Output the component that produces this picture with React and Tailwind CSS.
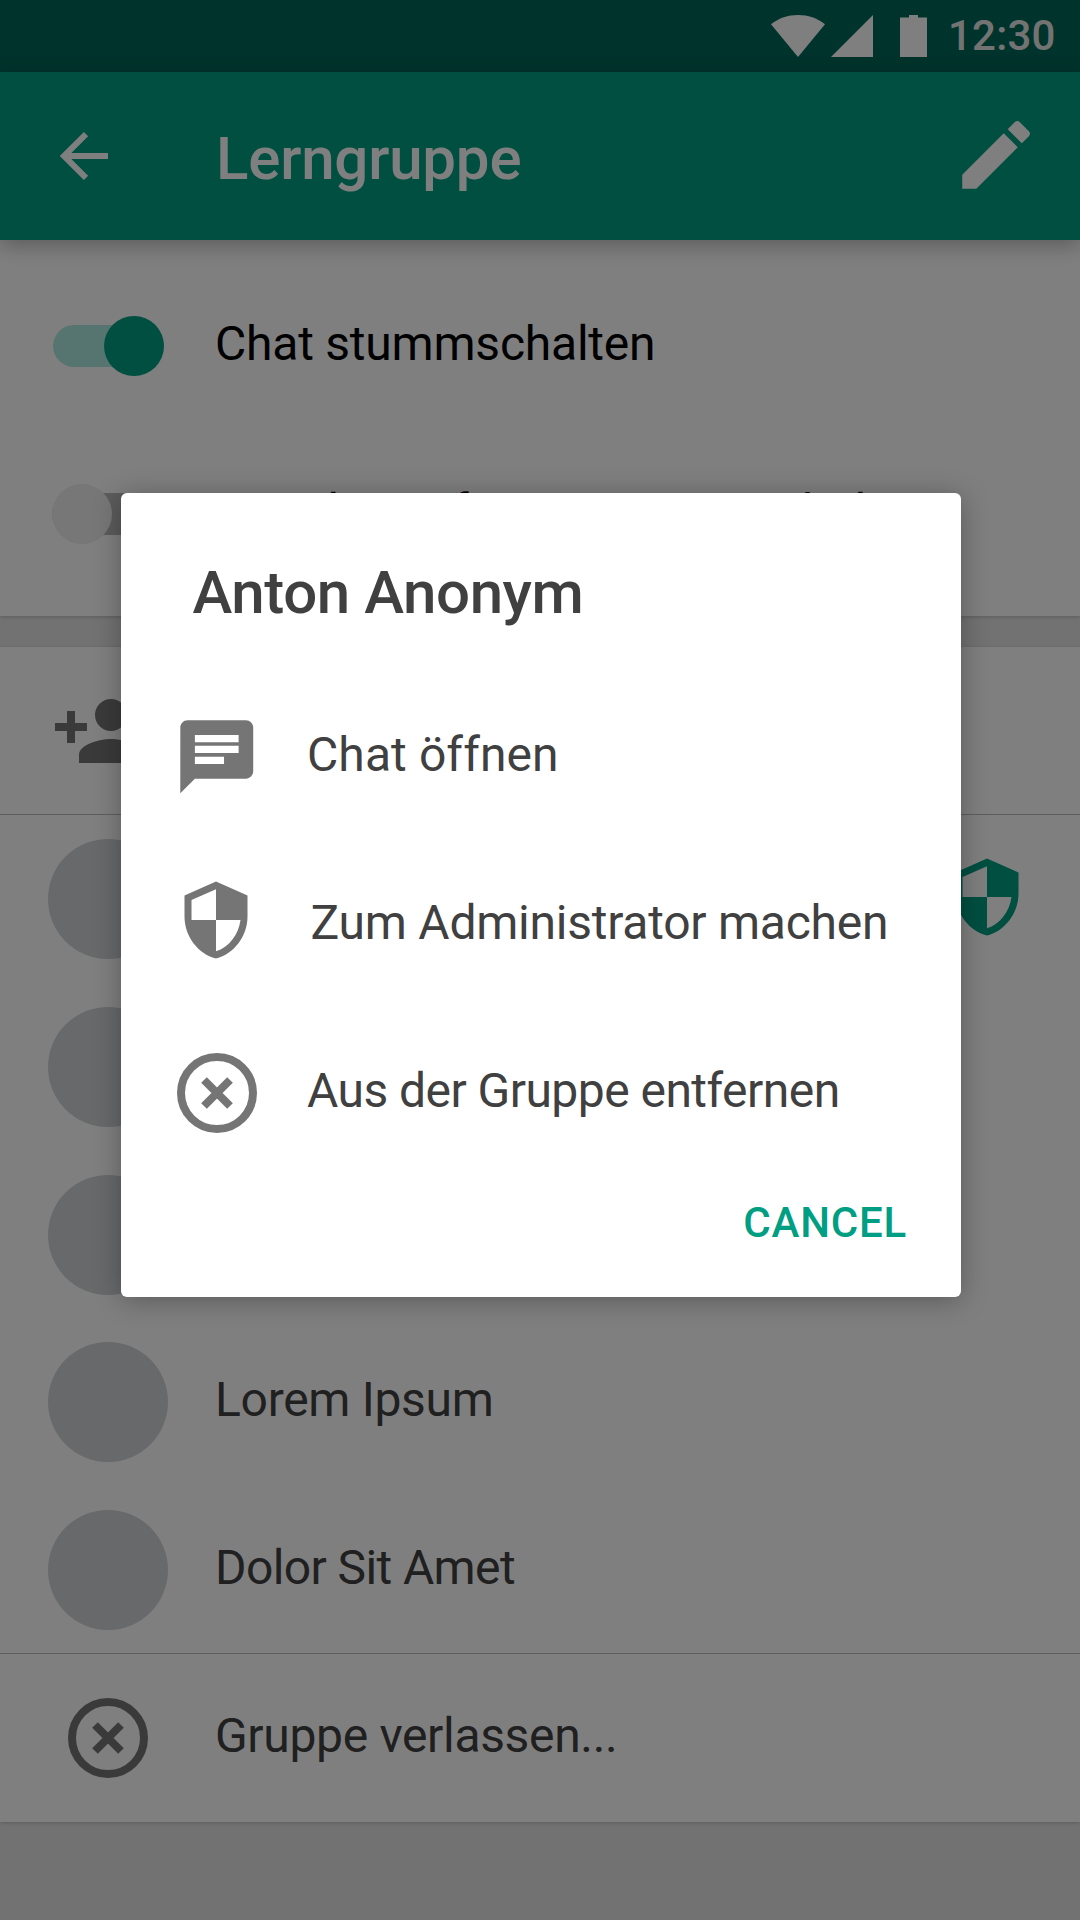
import React from "react";

function CircleX({ className }) {
  return (
    <svg viewBox="0 0 80 80" className={className} fill="none" stroke="#757575" strokeWidth="8">
      <circle cx="40" cy="40" r="36" />
      <path d="M27 27L53 53M53 27L27 53" />
    </svg>
  );
}

function Shield({ className }) {
  return (
    <svg viewBox="0 0 24 24" className={className} fill="currentColor">
      <path d="M12 1L3 5v6c0 5.55 3.84 10.74 9 12 5.16-1.26 9-6.45 9-12V5l-9-4zm0 10.99h7c-.53 4.12-3.28 7.79-7 8.94V12H5V6.3l7-3.11v8.8z" />
    </svg>
  );
}

function StatusBar() {
  return (
    <div className="flex h-[72px] items-start bg-[#006657] pl-[771px] text-white">
      <svg viewBox="0 0 156 42" className="mt-[15px] h-[42px] w-[156px] shrink-0" fill="#fff">
        <path d="M0 9.300C8 3 17 0 27 0s19 3 27 9.300L27 42z" />
        <path d="M102 0V42H60z" />
        <path d="M129 2.500h9V0h9v2.500h9V42h-27z" />
      </svg>
      <span className="ml-[21px] mt-[11px] text-[42px]/[50px] font-medium tracking-[0.2px] text-[#e6e6e6]">12:30</span>
    </div>
  );
}

function AppBar() {
  return (
    <div className="relative flex h-[168px] items-center bg-[#009e82] text-white shadow-[0_6px_20px_rgba(0,0,0,0.28)]">
      <svg viewBox="0 0 48 48" className="ml-[60px] size-12" fill="none" stroke="#fff" strokeWidth="6">
        <path d="M26 2.200L4 24l22 21.800M4 24h44" />
      </svg>
      <span className="ml-[108px] mt-[6px] text-[60px]/[72px] font-medium tracking-[-0.2px]">Lerngruppe</span>
      <svg viewBox="0 0 24 24" className="-mt-[2px] ml-auto mr-[39px] h-[90px] w-[90px]" fill="#fff">
        <path d="M3 17.250V21h3.750L17.810 9.940l-3.750-3.750L3 17.250zM20.710 7.040a.996.996 0 0 0 0-1.410l-2.340-2.340a.996.996 0 0 0-1.410 0l-1.830 1.830 3.750 3.750 1.830-1.830z" />
      </svg>
    </div>
  );
}

function Toggle({ on }) {
  return on ? (
    <span className="flex h-[42px] w-[111px] items-center justify-end rounded-full bg-[#adeae0]">
      <span className="size-[60px] rounded-full bg-[#009e82]" />
    </span>
  ) : (
    <span className="-ml-[1px] flex h-[42px] w-[112px] items-center rounded-full bg-[#b9b9b9]">
      <span className="size-[60px] shrink-0 rounded-full bg-[#eee]" />
    </span>
  );
}

function Setting({ on, label, labelClass }) {
  return (
    <div className="flex h-[168px] items-center pl-[53px]">
      <Toggle on={on} />
      <span className={`-mt-[5px] ml-[51px] whitespace-nowrap text-[48px]/[56px] text-black ${labelClass}`}>{label}</span>
    </div>
  );
}

function Member({ children, className = "h-[168px]" }) {
  return (
    <div className={`flex items-center pl-12 pr-[51px] ${className}`}>
      <span className="size-[120px] rounded-full bg-[#ced2d5]" />
      {children}
    </div>
  );
}

function Action({ icon, label, labelClass }) {
  return (
    <div className="flex h-[168px] items-center pl-[52px]">
      <span className="flex w-[88px] shrink-0 items-center justify-center">{icon}</span>
      <span className={`-mt-[3px] whitespace-nowrap text-[48px]/[56px] ${labelClass}`}>{label}</span>
    </div>
  );
}

function Dialog() {
  return (
    <div className="flex h-[804px] w-[840px] flex-col rounded-[6px] bg-white text-[#404040] shadow-[0_3px_28px_rgba(0,0,0,0.3)]">
      <h2 className="pl-[71.5px] pt-[65px] text-[60px]/[70px] font-medium tracking-[-0.43px]">Anton Anonym</h2>
      <div className="mt-[44px]">
        <Action
          label="Chat öffnen"
          labelClass="ml-[46px] tracking-[0.1px]"
          icon={
            <svg viewBox="0 0 24 24" className="mt-[2px] size-[87.5px] shrink-0" fill="#757575">
              <path d="M20 2H4c-1.100 0-1.990.900-1.990 2L2 22l4-4h14c1.100 0 2-.900 2-2V4c0-1.100-.900-2-2-2zM6 9h12v2H6V9zm8 5H6v-2h8v2zm4-6H6V6h12v2z" />
            </svg>
          }
        />
        <Action
          label="Zum Administrator machen"
          labelClass="ml-[49.5px] tracking-[-0.24px]"
          icon={<Shield className="-ml-[2px] -mt-[9px] size-[84px] text-[#757575]" />}
        />
        <Action
          label="Aus der Gruppe entfernen"
          labelClass="ml-[46px] tracking-[-0.54px]"
          icon={<CircleX className="mt-[2px] size-20" />}
        />
      </div>
      <button className="mr-[54px] mt-[19px] self-end text-[42px]/[56px] font-medium tracking-[0.8px] text-[#009e82]">CANCEL</button>
    </div>
  );
}

export default function App() {
  return (
    <div className="relative h-[1920px] w-[1080px] overflow-hidden bg-[#e5e5e5] font-['Roboto',sans-serif] text-[#404040]">
      <div className="relative z-10">
        <StatusBar />
        <AppBar />
      </div>
      <section className="h-[376px] bg-white pt-[22px] shadow-[0_1px_4px_rgba(0,0,0,0.2)]">
        <Setting on label="Chat stummschalten" labelClass="tracking-[-0.22px]" />
        <Setting label="Standortanfragen stummschalten" labelClass="tracking-normal" />
      </section>
      <section className="mt-[31px] bg-white shadow-[0_1px_4px_rgba(0,0,0,0.2)]">
        <div className="flex h-[168px] items-center border-b border-[#bdbdbd] pl-[51px]">
          <svg viewBox="0 0 24 24" className="size-24" fill="#757575">
            <path d="M15 12c2.210 0 4-1.790 4-4s-1.790-4-4-4-4 1.790-4 4 1.790 4 4 4zm-9-2V7H4v3H1v2h3v3h2v-3h3v-2H6zm9 4c-2.670 0-8 1.340-8 4v2h16v-2c0-2.660-5.330-4-8-4z" />
          </svg>
        </div>
        <Member>
          <Shield className="-mt-[5px] ml-auto size-[84px] text-[#009e82]" />
        </Member>
        <Member />
        <Member />
        <Member className="h-[168px] pb-[2px]">
          <span className="-mt-[5px] ml-[47px] text-[48px]/[56px] tracking-[-0.3px]">Lorem Ipsum</span>
        </Member>
        <Member className="h-[167px] border-b border-[#bdbdbd]">
          <span className="-mt-[5px] ml-[47px] text-[48px]/[56px] tracking-[-0.6px]">Dolor Sit Amet</span>
        </Member>
        <div className="flex h-[168px] items-center pl-[68px]">
          <CircleX className="size-20" />
          <span className="-mt-[5px] ml-[67px] text-[48px]/[56px] tracking-[-0.33px]">Gruppe verlassen...</span>
        </div>
      </section>
      <div className="absolute inset-0 z-20 flex items-start justify-center bg-black/50 pl-[2px] pt-[493px]">
        <Dialog />
      </div>
    </div>
  );
}
